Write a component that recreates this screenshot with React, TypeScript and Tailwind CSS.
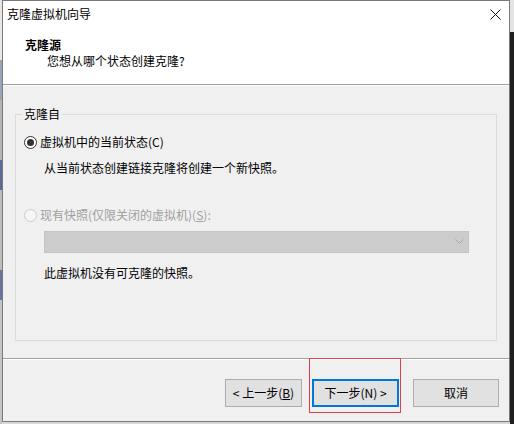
import React from "react";

const font = { fontFamily: '"Noto Sans CJK SC", "Noto Sans", sans-serif' };

function Radio({ checked, disabled }: { checked?: boolean; disabled?: boolean }) {
  return (
    <span
      className={
        "flex h-[13px] w-[13px] shrink-0 items-center justify-center rounded-full border " +
        (disabled ? "border-[#cccccc] bg-[#f6f6f6]" : "border-[#333333] bg-white")
      }
    >
      {checked ? <span className="h-[7px] w-[7px] rounded-full bg-[#333333]" /> : null}
    </span>
  );
}

export default function App() {
  return (
    <div
      className="relative flex h-[424px] w-[514px] overflow-hidden bg-[#d8d8d8] text-[12px] leading-4 text-black"
      style={font}
    >
      <div className="flex w-[2px] flex-col">
        <div className="h-[60px] bg-[#e6e6e6]" />
        <div className="h-[40px] bg-[#9aa4b8]" />
        <div className="h-[60px] bg-[#b5b5b5]" />
        <div className="h-[30px] bg-[#5a6a9a]" />
        <div className="h-[80px] bg-[#bdbdbd]" />
        <div className="h-[30px] bg-[#6a74a0]" />
        <div className="flex-1 bg-[#c4c4c4]" />
      </div>
      <div className="flex h-[422px] w-[508px] flex-col border border-[#7a7a7a] bg-[#f0f0f0]">
        <div className="flex h-[26px] items-center justify-between bg-white pl-[4px] pr-[6px]">
          <span>克隆虚拟机向导</span>
          <svg width="11" height="11" viewBox="0 0 11 11" className="mr-[2px] mt-[1px]">
            <path d="M0.5 0.5 L10.5 10.5 M10.5 0.5 L0.5 10.5" stroke="#111" strokeWidth="1" />
          </svg>
        </div>
        <div className="flex h-[57px] flex-col bg-white pt-[10px]">
          <span className="pl-[22px] font-bold">克隆源</span>
          <span className="pl-[44px]">您想从哪个状态创建克隆?</span>
        </div>
        <div className="h-px bg-[#a0a0a0]" />
        <div className="h-px bg-white" />
        <div className="flex h-[272px] flex-col pt-[22px]">
          <fieldset className="mx-[12px] m-0 h-[233px] border border-[#dcdcdc] p-0">
            <legend className="ml-[6px] px-[2px] leading-[12px]">克隆自</legend>
            <div className="mt-[14px] flex items-center gap-[3px] pl-[8px]">
              <Radio checked />
              <span>虚拟机中的当前状态(C)</span>
            </div>
            <div className="ml-[28px] mt-[10px]">从当前状态创建链接克隆将创建一个新快照。</div>
            <div className="mt-[31px] flex items-center gap-[3px] pl-[8px] text-[#a0a0a0]">
              <Radio disabled />
              <span>
                现有快照(仅限关闭的虚拟机)(<span className="underline">S</span>):
              </span>
            </div>
            <div className="ml-[28px] mt-[8px] flex h-[22px] w-[425px] items-center justify-end border border-[#c4c4c4] bg-[#cccccc] pr-[4px]">
              <svg width="9" height="6" viewBox="0 0 9 6">
                <path d="M0.5 0.5 L4.5 4.5 L8.5 0.5" stroke="#a8a8a8" fill="none" strokeWidth="1" />
              </svg>
            </div>
            <div className="ml-[28px] mt-[12px]">此虚拟机没有可克隆的快照。</div>
          </fieldset>
        </div>
        <div className="h-px bg-[#a0a0a0]" />
        <div className="h-px bg-white" />
        <div className="flex flex-1 items-start justify-end pr-[10px] pt-[19px]">
          <button className="flex h-[28px] w-[77px] items-center justify-center border border-[#adadad] bg-[#e1e1e1]">
            &lt; 上一步(<span className="underline">B</span>)
          </button>
          <button className="ml-[10px] flex h-[28px] w-[87px] items-center justify-center border-2 border-[#0078d7] bg-[#e1e1e1]">
            下一步(N) &gt;
          </button>
          <button className="ml-[14px] flex h-[28px] w-[86px] items-center justify-center border border-[#adadad] bg-[#e1e1e1]">
            取消
          </button>
        </div>
      </div>
      <div className="flex w-[4px] flex-col">
        <div className="h-[32px] bg-[#e4e4e4]" />
        <div className="flex-1 bg-[#1f1f1f]" />
      </div>
      <div className="pointer-events-none absolute left-[309px] top-[358px] h-[55px] w-[92px] border border-[#e0404a]" />
    </div>
  );
}
